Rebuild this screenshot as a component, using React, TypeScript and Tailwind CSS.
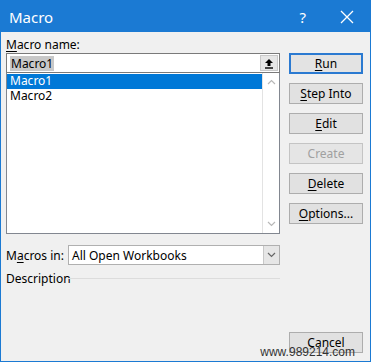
import React from "react";

const U = ({ c }: { c: string }) => <span className="underline underline-offset-2">{c}</span>;

function Btn({ children, disabled, primary, className = "" }: { children: React.ReactNode; disabled?: boolean; primary?: boolean; className?: string }) {
  return (
    <div
      className={
        "h-[21px] w-[74px] flex items-center justify-center text-[12px] leading-none " +
        (primary ? "border-2 border-[#2b7ad1] bg-[#e3e3e3] " : "border border-[#adadad] bg-[#e1e1e1] ") +
        (disabled ? "text-[#a0a0a0] border-[#c4c4c4] bg-[#e5e5e5] " : "text-black ") +
        className
      }
    >
      {children}
    </div>
  );
}

const Chevron = ({ up, color = "#b8b8b8" }: { up?: boolean; color?: string }) => (
  <svg width="9" height="6" viewBox="0 0 9 6">
    <path d={up ? "M1 5 L4.5 1.5 L8 5" : "M1 1 L4.5 4.5 L8 1"} fill="none" stroke={color} strokeWidth="1.2" />
  </svg>
);

export default function App() {
  return (
    <div
      className="relative w-[371px] h-[362px] flex flex-col bg-[#f0f0f0] border-x border-b border-[#1b7ad3] overflow-hidden"
      style={{ fontFamily: '"Noto Sans", sans-serif' }}
    >
      <div className="h-[32px] -mx-px bg-[#1b7ad3] flex items-center text-white pl-[9px]">
        <span className="text-[15px] mt-[2px]">Macro</span>
        <span className="ml-auto text-[15px] mr-[34px] mt-[2px]">?</span>
        <svg width="14" height="14" viewBox="0 0 14 14" className="mr-[17px] mt-[1px]">
          <path d="M1 1 L13 13 M13 1 L1 13" stroke="white" strokeWidth="1.3" />
        </svg>
      </div>
      <div className="flex-1 flex pl-[5px] pr-[6px] pb-[8px]">
        <div className="w-[274px] flex flex-col">
          <div className="h-[21px] pt-[5px] text-[12px] leading-[15px] text-black">
            <U c="M" />acro name:
          </div>
          <div className="h-[20px] border border-[#7a7a7a] bg-white flex items-center pl-[3px]">
            <span className="bg-[#c8c8c8] text-[12px] leading-[15px] px-px">Macro1</span>
            <div className="ml-auto mr-px h-[16px] w-[18px] bg-[#e6e6e6] border border-[#c8c8c8] flex items-center justify-center">
              <svg width="10" height="11" viewBox="0 0 10 11">
                <path d="M5 1 L1 5 H3.5 V8 H6.5 V5 H9 Z" fill="black" />
                <rect x="1" y="9.3" width="8" height="1.4" fill="black" />
              </svg>
            </div>
          </div>
          <div className="h-[161px] border border-[#828790] border-t-0 bg-white flex">
            <div className="flex-1 flex flex-col text-[12px] leading-[14px] pt-px">
              <div className="h-[15px] bg-[#0078d7] text-white pl-[3px]">Macro1</div>
              <div className="h-[15px] text-black pl-[3px]">Macro2</div>
            </div>
            <div className="w-[17px] border-l border-[#e3e3e3] flex flex-col items-center justify-between py-[6px]">
              <Chevron up />
              <Chevron />
            </div>
          </div>
          <div className="mt-[11px] flex items-center h-[20px]">
            <span className="w-[62px] text-[12px] leading-[15px]">
              M<U c="a" />cros in:
            </span>
            <div className="flex-1 h-[20px] border border-[#b0b0b0] bg-white flex items-center pl-[3px]">
              <span className="text-[12px] leading-[15px]">All Open Workbooks</span>
              <div className="ml-auto h-full w-[16px] bg-[#e6e6e6] border-l border-[#c8c8c8] flex items-center justify-center">
                <Chevron color="#666" />
              </div>
            </div>
          </div>
          <div className="mt-[6px] flex items-center">
            <span className="w-[62px] text-[12px] leading-[15px]">Description</span>
            <div className="flex-1 h-px bg-[#dcdcdc]" />
          </div>
        </div>
        <div className="ml-[9px] flex flex-col pt-[21px] gap-[9px]">
          <Btn primary><U c="R" />un</Btn>
          <Btn><U c="S" />tep Into</Btn>
          <Btn><U c="E" />dit</Btn>
          <Btn disabled>Create</Btn>
          <Btn><U c="D" />elete</Btn>
          <Btn><U c="O" />ptions...</Btn>
          <Btn className="mt-auto">Cancel</Btn>
        </div>
      </div>
      <span
        className="absolute right-[15px] bottom-[2px] text-[12px] leading-[13px] text-[#333]"
        style={{ fontFamily: '"Liberation Sans", sans-serif' }}
      >
        www.989214.com
      </span>
    </div>
  );
}
